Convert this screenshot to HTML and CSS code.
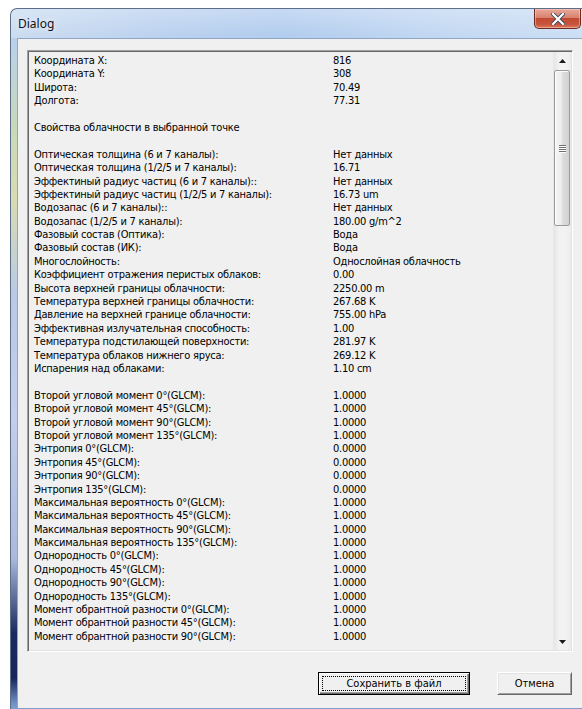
FILE: index.html
```html
<!DOCTYPE html>
<html lang="ru">
<head>
<meta charset="utf-8">
<title>Dialog</title>
<link rel="stylesheet" href="styles.css">
</head>
<body>
<div class="window">
  <div class="titlebar">
    <span class="title">Dialog</span>
    <div class="close">
      <svg width="14" height="12" viewBox="0 0 14 12">
        <path d="M2 1 L12 11 M12 1 L2 11" stroke="#3b4a5e" stroke-width="4" stroke-linecap="square"/>
        <path d="M2 1 L12 11 M12 1 L2 11" stroke="#ffffff" stroke-width="2.2" stroke-linecap="square"/>
      </svg>
    </div>
  </div>
  <div class="frame">
    <div class="client">
      <div class="textbox">
        <div class="lines">
          <div class="row"><span>Координата X:</span><span>816</span></div>
          <div class="row"><span>Координата Y:</span><span>308</span></div>
          <div class="row"><span>Широта:</span><span>70.49</span></div>
          <div class="row"><span>Долгота:</span><span>77.31</span></div>
          <div class="blank"></div>
          <div class="row"><span class="wide">Свойства облачности в выбранной точке</span></div>
          <div class="blank"></div>
          <div class="row"><span>Оптическая толщина (6 и 7 каналы):</span><span>Нет данных</span></div>
          <div class="row"><span>Оптическая толщина (1/2/5 и 7 каналы):</span><span>16.71</span></div>
          <div class="row"><span>Эффектиный радиус частиц (6 и 7 каналы)::</span><span>Нет данных</span></div>
          <div class="row"><span>Эффектиный радиус частиц (1/2/5 и 7 каналы):</span><span>16.73 um</span></div>
          <div class="row"><span>Водозапас (6 и 7 каналы)::</span><span>Нет данных</span></div>
          <div class="row"><span>Водозапас (1/2/5 и 7 каналы):</span><span>180.00 g/m^2</span></div>
          <div class="row"><span>Фазовый состав (Оптика):</span><span>Вода</span></div>
          <div class="row"><span>Фазовый состав (ИК):</span><span>Вода</span></div>
          <div class="row"><span>Многослойность:</span><span>Однослойная облачность</span></div>
          <div class="row"><span>Коэффициент отражения перистых облаков:</span><span>0.00</span></div>
          <div class="row"><span>Высота верхней границы облачности:</span><span>2250.00 m</span></div>
          <div class="row"><span>Температура верхней границы облачности:</span><span>267.68 K</span></div>
          <div class="row"><span>Давление на верхней границе облачности:</span><span>755.00 hPa</span></div>
          <div class="row"><span>Эффективная излучательная способность:</span><span>1.00</span></div>
          <div class="row"><span>Температура подстилающей поверхности:</span><span>281.97 K</span></div>
          <div class="row"><span>Температура облаков нижнего яруса:</span><span>269.12 K</span></div>
          <div class="row"><span>Испарения над облаками:</span><span>1.10 cm</span></div>
          <div class="blank"></div>
          <div class="row"><span>Второй угловой момент 0°(GLCM):</span><span>1.0000</span></div>
          <div class="row"><span>Второй угловой момент 45°(GLCM):</span><span>1.0000</span></div>
          <div class="row"><span>Второй угловой момент 90°(GLCM):</span><span>1.0000</span></div>
          <div class="row"><span>Второй угловой момент 135°(GLCM):</span><span>1.0000</span></div>
          <div class="row"><span>Энтропия 0°(GLCM):</span><span>0.0000</span></div>
          <div class="row"><span>Энтропия 45°(GLCM):</span><span>0.0000</span></div>
          <div class="row"><span>Энтропия 90°(GLCM):</span><span>0.0000</span></div>
          <div class="row"><span>Энтропия 135°(GLCM):</span><span>0.0000</span></div>
          <div class="row"><span>Максимальная вероятность 0°(GLCM):</span><span>1.0000</span></div>
          <div class="row"><span>Максимальная вероятность 45°(GLCM):</span><span>1.0000</span></div>
          <div class="row"><span>Максимальная вероятность 90°(GLCM):</span><span>1.0000</span></div>
          <div class="row"><span>Максимальная вероятность 135°(GLCM):</span><span>1.0000</span></div>
          <div class="row"><span>Однородность 0°(GLCM):</span><span>1.0000</span></div>
          <div class="row"><span>Однородность 45°(GLCM):</span><span>1.0000</span></div>
          <div class="row"><span>Однородность 90°(GLCM):</span><span>1.0000</span></div>
          <div class="row"><span>Однородность 135°(GLCM):</span><span>1.0000</span></div>
          <div class="row"><span>Момент обрантной разности 0°(GLCM):</span><span>1.0000</span></div>
          <div class="row"><span>Момент обрантной разности 45°(GLCM):</span><span>1.0000</span></div>
          <div class="row"><span>Момент обрантной разности 90°(GLCM):</span><span>1.0000</span></div>
        </div>
        <div class="scrollbar">
          <div class="arrow">
            <svg width="7" height="4" viewBox="0 0 7 4"><path d="M3.5 0 L7 4 L0 4 Z" fill="#1c1c1c"/></svg>
          </div>
          <div class="thumb">
            <div class="grip"><i></i><i></i><i></i><i></i></div>
          </div>
          <div class="track"></div>
          <div class="arrow">
            <svg width="7" height="4" viewBox="0 0 7 4"><path d="M0 0 L7 0 L3.5 4 Z" fill="#1c1c1c"/></svg>
          </div>
        </div>
      </div>
      <div class="buttons">
        <button class="btn default">Сохранить в файл</button>
        <button class="btn">Отмена</button>
      </div>
    </div>
  </div>
</div>
</body>
</html>
```
FILE: styles.css
```css
html, body {
  margin: 0;
  height: 100%;
  background: #ffffff;
  overflow: hidden;
}

body {
  padding: 8px 0 0 10px;
  box-sizing: border-box;
  font-family: "DejaVu Sans Condensed", "DejaVu Sans", sans-serif;
  font-size: 11px;
  color: #000;
}

/* Aero window shell */
.window {
  width: 600px;
  height: 704px;
  border: 1px solid #5d6f88;
  border-right: none;
  border-radius: 7px 0 0 0;
  box-sizing: border-box;
  display: flex;
  flex-direction: column;
  background:
    linear-gradient(to bottom, rgba(255,255,255,0.35), rgba(255,255,255,0) 40px),
    linear-gradient(to right, #c5d8ef 0%, #b2cced 25%, #a8c6ec 45%, #b9d2f0 70%, #c8dcf3 100%);
  overflow: hidden;
}

.titlebar {
  height: 29px;
  flex: none;
  display: flex;
  justify-content: space-between;
  align-items: flex-start;
}

.title {
  font-family: "Noto Sans", "Open Sans", sans-serif;
  font-size: 12px;
  color: #111;
  margin: 6px 0 0 7px;
  text-shadow: 0 0 6px rgba(255,255,255,0.9);
}

.close {
  width: 47px;
  height: 20px;
  margin-right: 29px;
  box-sizing: border-box;
  border: 1px solid #6b2a22;
  border-top: none;
  border-radius: 0 0 5px 5px;
  background: linear-gradient(to bottom, #e9a89a 0%, #d8826f 45%, #c24a33 50%, #c8543c 80%, #dc7a5e 100%);
  box-shadow: inset 0 0 0 1px rgba(255,220,210,0.45);
  display: flex;
  align-items: center;
  justify-content: center;
}

/* side frames around the client area */
.frame {
  flex: 1;
  display: flex;
  padding: 0 0 3px 6px;
  background: linear-gradient(to bottom,
    #b9d0ec 0px, #c8d9b8 90px, #d8dcb0 160px, #b9c9e6 260px,
    #c4cdea 380px, #aab9dd 520px, #1b2a5e 595px, #17265a 640px,
    #6f8fc4 665px, #b3cbeb 690px);
}

.client {
  flex: 1;
  background: #f0f0f0;
  border-top: 1px solid #90a6c4;
  border-left: 1px solid #90a6c4;
  display: flex;
  flex-direction: column;
}

/* read-only multiline edit */
.textbox {
  margin: 11px 0 0 9px;
  width: 546px;
  height: 602px;
  box-sizing: border-box;
  border: 1px solid;
  border-color: #a0a0a0 #ffffff #ffffff #a0a0a0;
  box-shadow: inset 1px 1px 0 #696969, inset -1px -1px 0 #e3e3e3;
  display: flex;
  overflow: hidden;
}

.lines {
  flex: 1;
  padding: 3px 0 0 6px;
  line-height: 13.4px;
  letter-spacing: -0.25px;
}

.row {
  display: grid;
  grid-template-columns: 299px auto;
  white-space: nowrap;
  height: 13.4px;
}

.wide {
  grid-column: 1 / 3;
}

.blank {
  height: 13.4px;
}

/* vertical scrollbar */
.scrollbar {
  width: 17px;
  margin: 1px 1px 1px 0;
  display: flex;
  flex-direction: column;
  background: linear-gradient(to right, #e6e6e6, #f2f2f2 30%, #f2f2f2 70%, #ececec);
  border-left: 1px solid #e8e8e8;
}

.arrow {
  height: 17px;
  flex: none;
  display: flex;
  align-items: center;
  justify-content: center;
}

.thumb {
  height: 156px;
  margin: 1px 1px 0 0;
  box-sizing: border-box;
  border: 1px solid #9a9a9a;
  border-radius: 2px;
  background: linear-gradient(to right, #f6f6f6 0%, #ececec 45%, #dcdcdc 55%, #d2d2d2 100%);
  box-shadow: inset 1px 1px 0 #fcfcfc;
  display: flex;
  align-items: center;
  justify-content: center;
}

.grip {
  display: flex;
  flex-direction: column;
  gap: 1px;
}

.grip i {
  display: block;
  width: 7px;
  height: 1px;
  background: #6f6f6f;
  box-shadow: 0 1px 0 #ffffff;
}

.track {
  flex: 1;
}

/* dialog buttons */
.buttons {
  display: flex;
  gap: 27px;
  margin: 20px 0 0 300px;
}

.btn {
  font-family: inherit;
  font-size: 11px;
  color: #000;
  height: 23px;
  width: 75px;
  padding: 0;
  box-sizing: border-box;
  background: #f0f0f0;
  border: 1px solid;
  border-color: #ffffff #696969 #696969 #ffffff;
  box-shadow: inset 1px 1px 0 #e3e3e3, inset -1px -1px 0 #a0a0a0;
}

.btn.default {
  width: 152px;
  border: 1px solid #000;
  box-shadow: inset 1px 1px 0 #ffffff, inset -1px -1px 0 #696969, inset -2px -2px 0 #a0a0a0;
  outline: 1px dotted #000;
  outline-offset: -5px;
}
```
